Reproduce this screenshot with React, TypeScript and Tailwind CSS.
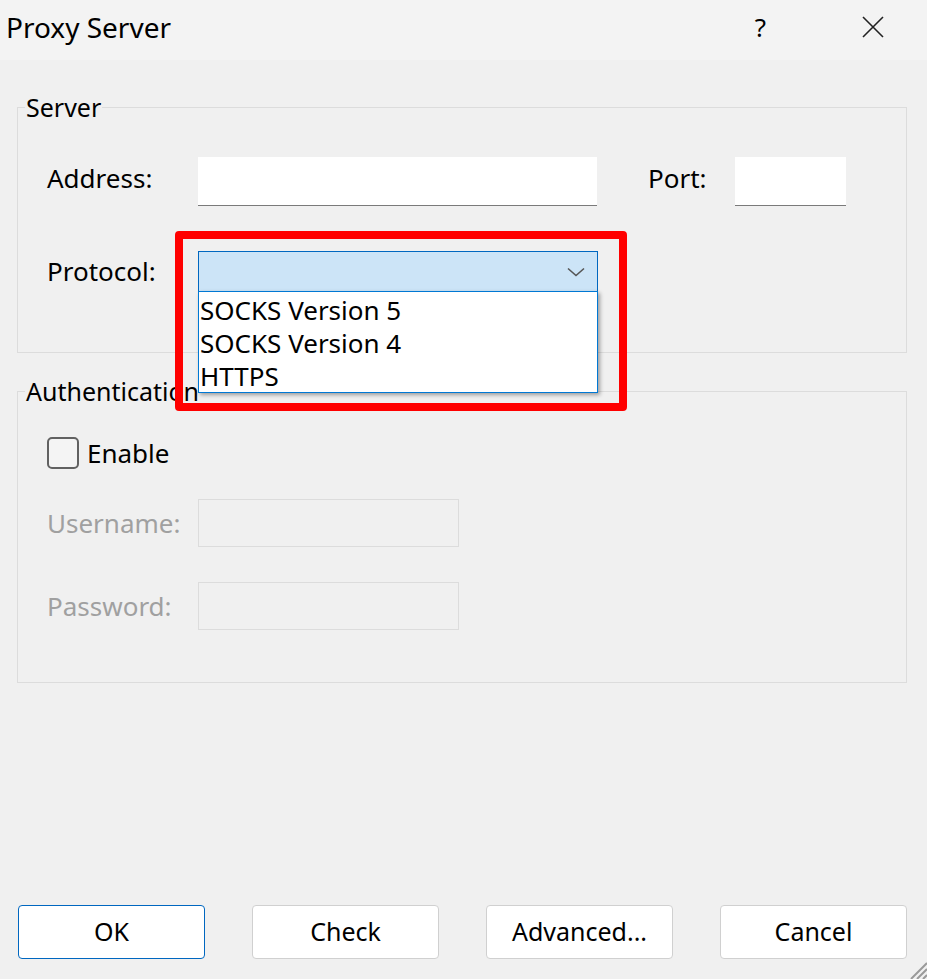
import React from "react";

const font = { fontFamily: '"Noto Sans", "Open Sans", sans-serif' };

function GroupBox({ title, className, children }: { title: string; className: string; children: React.ReactNode }) {
  return (
    <div className={"relative border border-[#dcdcdc] " + className}>
      <span className="absolute left-[7px] top-[-18px] bg-[#f0f0f0] px-[1px] text-[25px] leading-[34px] text-black">
        {title}
      </span>
      {children}
    </div>
  );
}

function Chevron() {
  return (
    <svg width="18" height="10" viewBox="0 0 18 10" fill="none">
      <path d="M1 1.5 L9 8.5 L17 1.5" stroke="#555" strokeWidth="1.6" />
    </svg>
  );
}

function Grip() {
  return (
    <svg width="20" height="20" viewBox="0 0 20 20" className="absolute bottom-0 right-0">
      <path d="M20 4 L4 20 M20 10 L10 20 M20 16 L16 20" stroke="#9a9a9a" strokeWidth="2" />
    </svg>
  );
}

function Button({ label, primary }: { label: string; primary?: boolean }) {
  return (
    <button
      className={
        "h-[54px] w-[187px] rounded-[4px] border bg-white text-[25px] text-black " +
        (primary ? "border-[#0067c0]" : "border-[#d0d0d0]")
      }
    >
      {label}
    </button>
  );
}

export default function App() {
  return (
    <div style={font} className="relative flex h-[979px] w-[927px] flex-col overflow-hidden bg-[#f0f0f0] text-black">
      {/* title bar */}
      <div className="flex h-[60px] shrink-0 items-center bg-[#f3f3f3] pl-[6px]">
        <span className="mb-[6px] text-[28px]">Proxy Server</span>
        <span className="mb-[6px] ml-auto mr-[96px] text-[26px]">?</span>
        <svg width="22" height="22" viewBox="0 0 22 22" className="mb-[6px] mr-[43px]">
          <path d="M1 1 L21 21 M21 1 L1 21" stroke="#222" strokeWidth="1.6" />
        </svg>
      </div>

      <div className="flex flex-1 flex-col pl-[17px] pr-[20px]">
        <GroupBox title="Server" className="mt-[47px] h-[246px]">
          <div className="flex flex-col pl-[29px] pt-[49px]">
            <div className="flex h-[49px] items-center">
              <span className="mb-[6px] w-[151px] text-[26px]">Address:</span>
              <div className="h-[49px] w-[399px] border-b border-[#7a7a7a] bg-white" />
              <span className="mb-[6px] ml-[51px] w-[87px] text-[26px]">Port:</span>
              <div className="h-[49px] w-[111px] border-b border-[#7a7a7a] bg-white" />
            </div>
            <div className="mt-[45px] flex h-[41px] items-center">
              <span className="w-[151px] text-[26px]">Protocol:</span>
              <div className="relative h-[41px] w-[400px]">
                <div className="flex h-full items-center justify-end border border-[#0067c0] bg-[#cce4f7] pr-[12px]">
                  <Chevron />
                </div>
                <div className="absolute left-0 top-[40px] z-10 flex h-[102px] w-[400px] flex-col border border-[#0078d4] bg-white pl-[1px] pt-[2px] text-[26px] leading-[33px] shadow-[2px_2px_4px_rgba(0,0,0,0.35)]">
                  <span>SOCKS Version 5</span>
                  <span>SOCKS Version 4</span>
                  <span>HTTPS</span>
                </div>
              </div>
            </div>
          </div>
        </GroupBox>

        <GroupBox title="Authentication" className="mt-[38px] h-[292px]">
          <div className="flex flex-col pl-[29px] pt-[45px]">
            <div className="flex h-[32px] items-center">
              <div className="h-[32px] w-[32px] rounded-[5px] border-2 border-[#616161] bg-[#f4f4f4]" />
              <span className="ml-[8px] text-[26px]">Enable</span>
            </div>
            <div className="mt-[30px] flex h-[48px] items-center">
              <span className="w-[151px] text-[26px] text-[#a0a0a0]">Username:</span>
              <div className="h-[48px] w-[261px] border border-[#dcdcdc]" />
            </div>
            <div className="mt-[35px] flex h-[48px] items-center">
              <span className="w-[151px] text-[26px] text-[#a0a0a0]">Password:</span>
              <div className="h-[48px] w-[261px] border border-[#dcdcdc]" />
            </div>
          </div>
        </GroupBox>

        <div className="mb-[20px] ml-[1px] mt-auto flex justify-between">
          <Button label="OK" primary />
          <Button label="Check" />
          <Button label="Advanced..." />
          <Button label="Cancel" />
        </div>
      </div>

      {/* highlight annotation */}
      <div className="pointer-events-none absolute left-[175px] top-[231px] z-20 h-[180px] w-[452px] rounded-[4px] border-[8px] border-[#ff0000]" />
      <Grip />
    </div>
  );
}
